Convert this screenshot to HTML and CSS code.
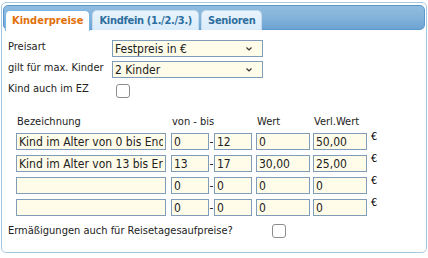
FILE: index.html
```html
<!DOCTYPE html>
<html lang="de">
<head>
    <meta charset="UTF-8">
    <meta name="viewport" content="width=device-width, initial-scale=1.0">
    <title>Kinderpreise</title>
    <link rel="stylesheet" href="styles.css">
</head>
<body>
    <div class="tabs">
        <!-- Reiter -->
        <ul class="tab-nav">
            <li class="tab active">Kinderpreise</li>
            <li class="tab">Kindfein (1./2./3.)</li>
            <li class="tab">Senioren</li>
        </ul>

        <div class="tab-panel">
            <div class="form-grid">
                <label class="form-label">Preisart</label>
                <div class="select">
                    <span>Festpreis in €</span>
                    <svg class="chevron" width="6" height="4" viewBox="0 0 6 4"><path d="M0.5 0.5 L3 3 L5.5 0.5" fill="none" stroke="#333" stroke-width="1.2"/></svg>
                </div>

                <label class="form-label">gilt für max. Kinder</label>
                <div class="select">
                    <span>2 Kinder</span>
                    <svg class="chevron" width="6" height="4" viewBox="0 0 6 4"><path d="M0.5 0.5 L3 3 L5.5 0.5" fill="none" stroke="#333" stroke-width="1.2"/></svg>
                </div>

                <label class="form-label">Kind auch im EZ</label>
                <div><span class="checkbox"></span></div>
            </div>

            <!-- Preistabelle -->
            <div class="price-table">
                <div class="th">Bezeichnung</div>
                <div class="th th-range">von - bis</div>
                <div class="th">Wert</div>
                <div class="th">Verl.Wert</div>
                <div></div>

                <input class="field f-name" type="text" value="Kind im Alter von 0 bis Ende 12 Jahre">
                <input class="field" type="text" value="0">
                <span class="dash">-</span>
                <input class="field f-bis" type="text" value="12">
                <input class="field f-wert" type="text" value="0">
                <input class="field f-verl" type="text" value="50,00">
                <span class="euro">€</span>

                <input class="field f-name" type="text" value="Kind im Alter von 13 bis Ende 17 Jahre">
                <input class="field" type="text" value="13">
                <span class="dash">-</span>
                <input class="field f-bis" type="text" value="17">
                <input class="field f-wert" type="text" value="30,00">
                <input class="field f-verl" type="text" value="25,00">
                <span class="euro">€</span>

                <input class="field f-name" type="text" value="">
                <input class="field" type="text" value="0">
                <span class="dash">-</span>
                <input class="field f-bis" type="text" value="0">
                <input class="field f-wert" type="text" value="0">
                <input class="field f-verl" type="text" value="0">
                <span class="euro">€</span>

                <input class="field f-name" type="text" value="">
                <input class="field" type="text" value="0">
                <span class="dash">-</span>
                <input class="field f-bis" type="text" value="0">
                <input class="field f-wert" type="text" value="0">
                <input class="field f-verl" type="text" value="0">
                <span class="euro">€</span>
            </div>

            <div class="bottom-row">
                <label class="form-label">Ermäßigungen auch für Reisetagesaufpreise?</label>
                <span class="checkbox"></span>
            </div>
        </div>
    </div>
</body>
</html>
```

FILE: styles.css
```css
body {
    font-family: "DejaVu Sans Condensed", "DejaVu Sans", sans-serif;
    font-size: 11px;
    color: #222;
    margin: 0;
    padding: 0;
    background: #fff;
}

/* Rahmen der Reiter */
.tabs {
    width: 426px;
    height: 251px;
    margin: 2px 0 0 1px;
    padding: 2px 1px;
    border: 1px solid #a6c9e2;
    border-radius: 5px;
    box-sizing: border-box;
}

.tab-nav {
    display: flex;
    gap: 2px;
    margin: 0;
    padding: 4px 1px 0 1px;
    height: 25px;
    box-sizing: border-box;
    list-style: none;
    border: 1px solid #5a98d0;
    border-radius: 5px;
    background: linear-gradient(#90bce0, #82b2da 55%, #6ea3d3);
}

.tab {
    padding: 0 6px;
    height: 20px;
    line-height: 19px;
    font-size: 11px;
    font-weight: bold;
    letter-spacing: -0.3px;
    color: #2e6e9e;
    background: linear-gradient(#e9f4fd, #d9ebfa);
    border: 1px solid #c5dbec;
    border-bottom: none;
    border-radius: 5px 5px 0 0;
    box-sizing: border-box;
}

.tab.active {
    height: 21px;
    letter-spacing: 0;
    color: #e17009;
    background: #fff;
    border-color: #79b7e7;
}

.tab-panel {
    padding: 8px 0 0 5px;
}

.form-grid {
    display: grid;
    grid-template-columns: 104px 151px;
    grid-auto-rows: 21px;
    align-items: center;
}

.form-label {
    align-self: start;
    padding-top: 2px;
}

.select {
    display: flex;
    align-items: center;
    justify-content: space-between;
    height: 17px;
    padding: 0 10px 0 2px;
    font-size: 12px;
    background: #fffdea;
    border: 1px solid #7f9db9;
    box-sizing: border-box;
}

.checkbox {
    display: block;
    width: 14px;
    height: 14px;
    margin-left: 4px;
    border: 1px solid #8d8d8d;
    border-radius: 3px;
    background: #fff;
    box-sizing: border-box;
}

/* Preistabelle */
.price-table {
    display: grid;
    grid-template-columns: 155px 38px 5px 42px 57px 58px auto;
    row-gap: 5px;
    margin: 15px 0 0 8px;
    align-items: center;
}

.th {
    height: 12px;
    padding-left: 1px;
    line-height: 12px;
    white-space: nowrap;
}

.th-range {
    grid-column: span 3;
}

.field {
    height: 17px;
    width: auto;
    min-width: 0;
    padding: 0 2px;
    margin: 0;
    font-family: inherit;
    font-size: 12px;
    color: #222;
    background: #fffdea;
    border: 1px solid #7f9db9;
    box-sizing: border-box;
    outline: none;
}

.f-name {
    margin-right: 5px;
}

.f-bis {
    margin-right: 4px;
}

.f-wert {
    margin-right: 3px;
}

.f-verl {
    margin-right: 4px;
}

.dash {
    text-align: center;
    font-size: 12px;
}

.euro {
    align-self: start;
    margin-top: -3px;
    font-size: 11px;
    color: #000;
}

.bottom-row {
    display: grid;
    grid-template-columns: 264px 14px;
    margin-top: 6px;
    align-items: center;
}

.bottom-row .checkbox {
    margin: 2px 0 0 0;
}
```
